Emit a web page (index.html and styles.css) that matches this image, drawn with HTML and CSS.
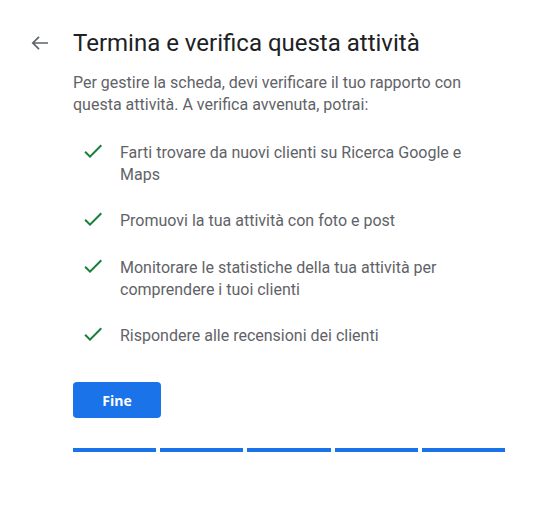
FILE: index.html
```html
<!DOCTYPE html>
<html lang="it">
<head>
<meta charset="utf-8">
<title>Termina e verifica questa attività</title>
<link rel="stylesheet" href="styles.css">
</head>
<body>
<div class="page">
  <div class="header">
    <button class="back" aria-label="Indietro">
      <svg viewBox="0 0 24 24" width="24" height="24"><path d="M20 12H5M11 5.8L4.8 12L11 18.2" fill="none" stroke="#5f6368" stroke-width="1.7"/></svg>
    </button>
    <h1 class="title">Termina e verifica questa attività</h1>
  </div>
  <div class="content">
    <p class="intro">Per gestire la scheda, devi verificare il tuo rapporto con questa attività. A verifica avvenuta, potrai:</p>
    <ul class="benefits">
      <li class="benefit"><svg class="check" viewBox="0 0 24 24" width="24" height="24"><path d="M9 16.17L4.83 12l-1.42 1.41L9 19 21 7l-1.41-1.41z" fill="#188038"/></svg><span class="benefit-text">Farti trovare da nuovi clienti su Ricerca Google e Maps</span></li>
      <li class="benefit"><svg class="check" viewBox="0 0 24 24" width="24" height="24"><path d="M9 16.17L4.83 12l-1.42 1.41L9 19 21 7l-1.41-1.41z" fill="#188038"/></svg><span class="benefit-text">Promuovi la tua attività con foto e post</span></li>
      <li class="benefit"><svg class="check" viewBox="0 0 24 24" width="24" height="24"><path d="M9 16.17L4.83 12l-1.42 1.41L9 19 21 7l-1.41-1.41z" fill="#188038"/></svg><span class="benefit-text">Monitorare le statistiche della tua attività per comprendere i tuoi clienti</span></li>
      <li class="benefit"><svg class="check" viewBox="0 0 24 24" width="24" height="24"><path d="M9 16.17L4.83 12l-1.42 1.41L9 19 21 7l-1.41-1.41z" fill="#188038"/></svg><span class="benefit-text">Rispondere alle recensioni dei clienti</span></li>
    </ul>
    <button class="done">Fine</button>
    <div class="progress">
      <span class="seg"></span><span class="seg"></span><span class="seg"></span><span class="seg"></span><span class="seg"></span>
    </div>
  </div>
</div>
</body>
</html>
```
FILE: styles.css
```css
html, body {
  margin: 0;
  padding: 0;
  background: #ffffff;
}
.page {
  padding: 27px 0 0 28px;
  font-family: Roboto, "Liberation Sans", Arial, sans-serif;
}
.header {
  display: flex;
  align-items: center;
  gap: 21px;
}
.back {
  width: 24px;
  height: 24px;
  padding: 0;
  border: 0;
  background: none;
  display: flex;
}
.title {
  margin: 0;
  font-family: Roboto, "Open Sans", sans-serif;
  font-size: 24px;
  line-height: 32px;
  font-weight: 400;
  color: #202124;
}
.content {
  margin-left: 45px;
  width: 432px;
}
.intro {
  margin: 13px 0 0;
  font-size: 16px;
  line-height: 22px;
  color: #5f6368;
}
.benefits {
  list-style: none;
  margin: 25px 0 0;
  padding: 0;
  display: flex;
  flex-direction: column;
  gap: 23px;
}
.benefit {
  display: flex;
  align-items: flex-start;
  min-height: 24px;
}
.check {
  flex: none;
  margin: -2px 15px 0 8px;
}
.benefit-text {
  max-width: 370px;
  padding-top: 1px;
  font-size: 16px;
  line-height: 22px;
  color: #5f6368;
}
.done {
  display: block;
  margin-top: 34px;
  width: 88px;
  height: 36px;
  border: 0;
  border-radius: 4px;
  background: #1a73e8;
  color: #ffffff;
  font-family: "Open Sans", Roboto, sans-serif;
  font-size: 14px;
  font-weight: 700;
  padding: 0;
}
.progress {
  display: flex;
  gap: 4px;
  margin-top: 30px;
}
.seg {
  flex: 1;
  height: 4px;
  background: #1a73e8;
}
```
